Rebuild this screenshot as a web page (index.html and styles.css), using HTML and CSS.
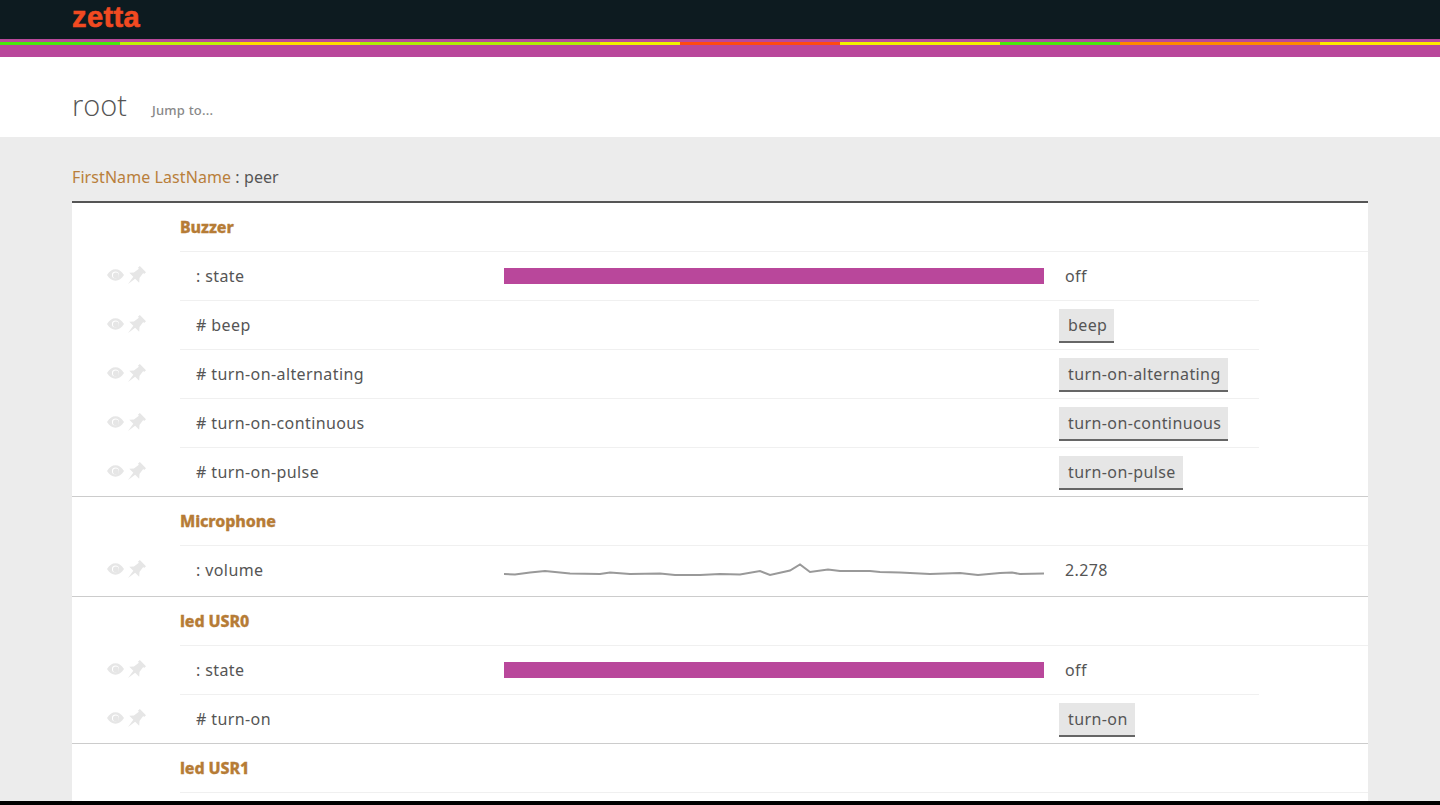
FILE: index.html

```html
<!DOCTYPE html>
<html lang="en">
<head>
    <meta charset="UTF-8">
    <title>Zetta - root</title>
    <link rel="stylesheet" href="styles.css">
</head>
<body>
    <svg class="defs" width="0" height="0">
        <symbol id="eye" viewBox="0 0 18 12">
            <path fill-rule="evenodd" d="M0 6C2.500 2 5.500 0 9 0s6.500 2 9 6c-2.500 4-5.500 6-9 6S2.500 10 0 6zM5.200 6a3.800 3.800 0 1 0 7.600 0a3.800 3.800 0 1 0-7.600 0zM6.300 6.400a3.100 3.100 0 1 1 6.200 0a3.100 3.100 0 1 1-6.200 0z"/>
        </symbol>
        <symbol id="pin" viewBox="3.500 0 20.500 20.500">
            <path transform="rotate(45 12 12)" d="M7 0h10v3h-1.500l1 7 3.500 4h-6.500L12 24l-1.500-10H4l3.500-4 1-7H7z"/>
        </symbol>
    </svg>

    <header class="topbar">
        <div class="logo">zetta</div>
    </header>
    <div class="stripe">
        <div class="stripe-colors">
            <i style="width:120px;background:#48e80c"></i>
            <i style="width:120px;background:#c0f005"></i>
            <i style="width:120px;background:#ffdc00"></i>
            <i style="width:240px;background:#b0ec05"></i>
            <i style="width:80px;background:#f0f000"></i>
            <i style="width:160px;background:#ff4a12"></i>
            <i style="width:160px;background:#f2f000"></i>
            <i style="width:120px;background:#48e80c"></i>
            <i style="width:200px;background:#ff8a00"></i>
            <i style="width:120px;background:#ffe800"></i>
        </div>
    </div>

    <div class="titlebar">
        <h1>root</h1>
        <span class="jump">Jump to...</span>
    </div>

    <div class="content">
        <div class="peer"><span class="peer-name">FirstName LastName</span> : peer</div>

        <div class="devices">
            <section class="device">
                <h3>Buzzer</h3>
                <div class="row">
                    <div class="icons"><svg class="eye"><use href="#eye"/></svg><svg class="pin"><use href="#pin"/></svg></div>
                    <div class="name">: state</div>
                    <div class="viz"><div class="bar"></div></div>
                    <div class="val">off</div>
                </div>
                <div class="row">
                    <div class="icons"><svg class="eye"><use href="#eye"/></svg><svg class="pin"><use href="#pin"/></svg></div>
                    <div class="name"># beep</div>
                    <div class="viz"></div>
                    <div class="act"><button>beep</button></div>
                </div>
                <div class="row">
                    <div class="icons"><svg class="eye"><use href="#eye"/></svg><svg class="pin"><use href="#pin"/></svg></div>
                    <div class="name"># turn-on-alternating</div>
                    <div class="viz"></div>
                    <div class="act"><button>turn-on-alternating</button></div>
                </div>
                <div class="row">
                    <div class="icons"><svg class="eye"><use href="#eye"/></svg><svg class="pin"><use href="#pin"/></svg></div>
                    <div class="name"># turn-on-continuous</div>
                    <div class="viz"></div>
                    <div class="act"><button>turn-on-continuous</button></div>
                </div>
                <div class="row">
                    <div class="icons"><svg class="eye"><use href="#eye"/></svg><svg class="pin"><use href="#pin"/></svg></div>
                    <div class="name"># turn-on-pulse</div>
                    <div class="viz"></div>
                    <div class="act"><button>turn-on-pulse</button></div>
                </div>
            </section>

            <section class="device">
                <h3>Microphone</h3>
                <div class="row tall">
                    <div class="icons"><svg class="eye"><use href="#eye"/></svg><svg class="pin"><use href="#pin"/></svg></div>
                    <div class="name">: volume</div>
                    <div class="viz">
                        <svg class="spark" viewBox="0 0 540 20">
                            <polyline points="0,12 11,12.500 26,10.500 41,9 66,11.500 96,12 106,10.500 126,12 156,11.500 171,13 196,13 216,12 236,12.500 256,9 266,13 286,8.500 296,2.500 306,10 324,7.500 336,9 366,9 376,10 396,10.500 426,12 456,11 474,13 496,11 508,10.500 516,12 540,11.500"/>
                        </svg>
                    </div>
                    <div class="val">2.278</div>
                </div>
            </section>

            <section class="device">
                <h3>led USR0</h3>
                <div class="row">
                    <div class="icons"><svg class="eye"><use href="#eye"/></svg><svg class="pin"><use href="#pin"/></svg></div>
                    <div class="name">: state</div>
                    <div class="viz"><div class="bar"></div></div>
                    <div class="val">off</div>
                </div>
                <div class="row">
                    <div class="icons"><svg class="eye"><use href="#eye"/></svg><svg class="pin"><use href="#pin"/></svg></div>
                    <div class="name"># turn-on</div>
                    <div class="viz"></div>
                    <div class="act"><button>turn-on</button></div>
                </div>
            </section>

            <section class="device">
                <h3>led USR1</h3>
            </section>
        </div>
    </div>
    <div class="bottom-edge"></div>
</body>
</html>
```

FILE: styles.css

```css
html, body { height: 805px; overflow: hidden; }
body { margin: 0; background: #ececec; color: #555; font-family: "Noto Sans", sans-serif; font-size: 16px; letter-spacing: .4px; position: relative; }
.defs { position: absolute; }

.topbar { height: 39px; background: #0d1b20; padding-left: 72px; }
.logo { color: #f24a21; font-family: "Liberation Sans", sans-serif; font-weight: 700; font-size: 29px; line-height: 34px; letter-spacing: .4px; -webkit-text-stroke: .6px #f24a21; }
.stripe { height: 18px; background: #b9479b; padding-top: 3px; box-sizing: border-box; }
.stripe-colors { display: flex; height: 3px; }
.stripe-colors i { display: block; }

.titlebar { height: 80px; background: #fff; padding-left: 72px; display: flex; align-items: flex-start; box-sizing: border-box; padding-top: 27px; }
.titlebar h1 { margin: 0; font-family: "Open Sans", sans-serif; font-weight: 300; font-size: 29px; line-height: 42px; color: #555; letter-spacing: 0; }
.jump { margin: 17px 0 0 25px; font-size: 13px; line-height: 18px; color: #888; font-weight: 500; letter-spacing: .2px; }

.content { padding: 0 72px; }
.peer { height: 64px; line-height: 81px; letter-spacing: .08px; }
.peer-name { color: #b97f3b; }

.devices { background: #fff; border-top: 2px solid #555; height: 600px; overflow: hidden; }
.device { border-bottom: 1px solid #ccc; padding-left: 108px; }
.device:last-child { border-bottom: 0; }
.device h3 { margin: 0; height: 48px; line-height: 48px; font-size: 16px; font-weight: 800; letter-spacing: -.1px; color: #b67c36; -webkit-text-stroke: .3px #b67c36; border-bottom: 1px solid #f0f0f0; }

.row { display: flex; align-items: center; width: 1079px; height: 48px; border-bottom: 1px solid #f0f0f0; position: relative; }
.row:last-child { border-bottom: 0; }
.row.tall { height: 50px; padding-bottom: 2px; box-sizing: border-box; }
.icons { position: absolute; left: -73px; top: 14px; display: flex; align-items: center; gap: 4px; }
.eye { width: 17px; height: 12px; fill: #e6e6e6; }
.pin { width: 18px; height: 18px; fill: #e6e6e6; }
.name { width: 324px; padding-left: 16px; box-sizing: border-box; }
.viz { width: 540px; }
.bar { height: 16px; background: #b9479b; }
.spark { display: block; width: 540px; height: 20px; margin-top: 4px; }
.spark polyline { fill: none; stroke: #999; stroke-width: 2; }
.val { padding-left: 21px; }
.act { padding-left: 15px; }
button { display: block; font: inherit; letter-spacing: inherit; color: #555; background: #e6e6e6; border: 0; border-bottom: 2px solid #666; padding: 0 7px 0 9px; height: 34px; line-height: 32px; margin-top: 2px; }

.bottom-edge { position: absolute; left: 0; right: 0; bottom: 0; height: 4px; background: #000; }
```
